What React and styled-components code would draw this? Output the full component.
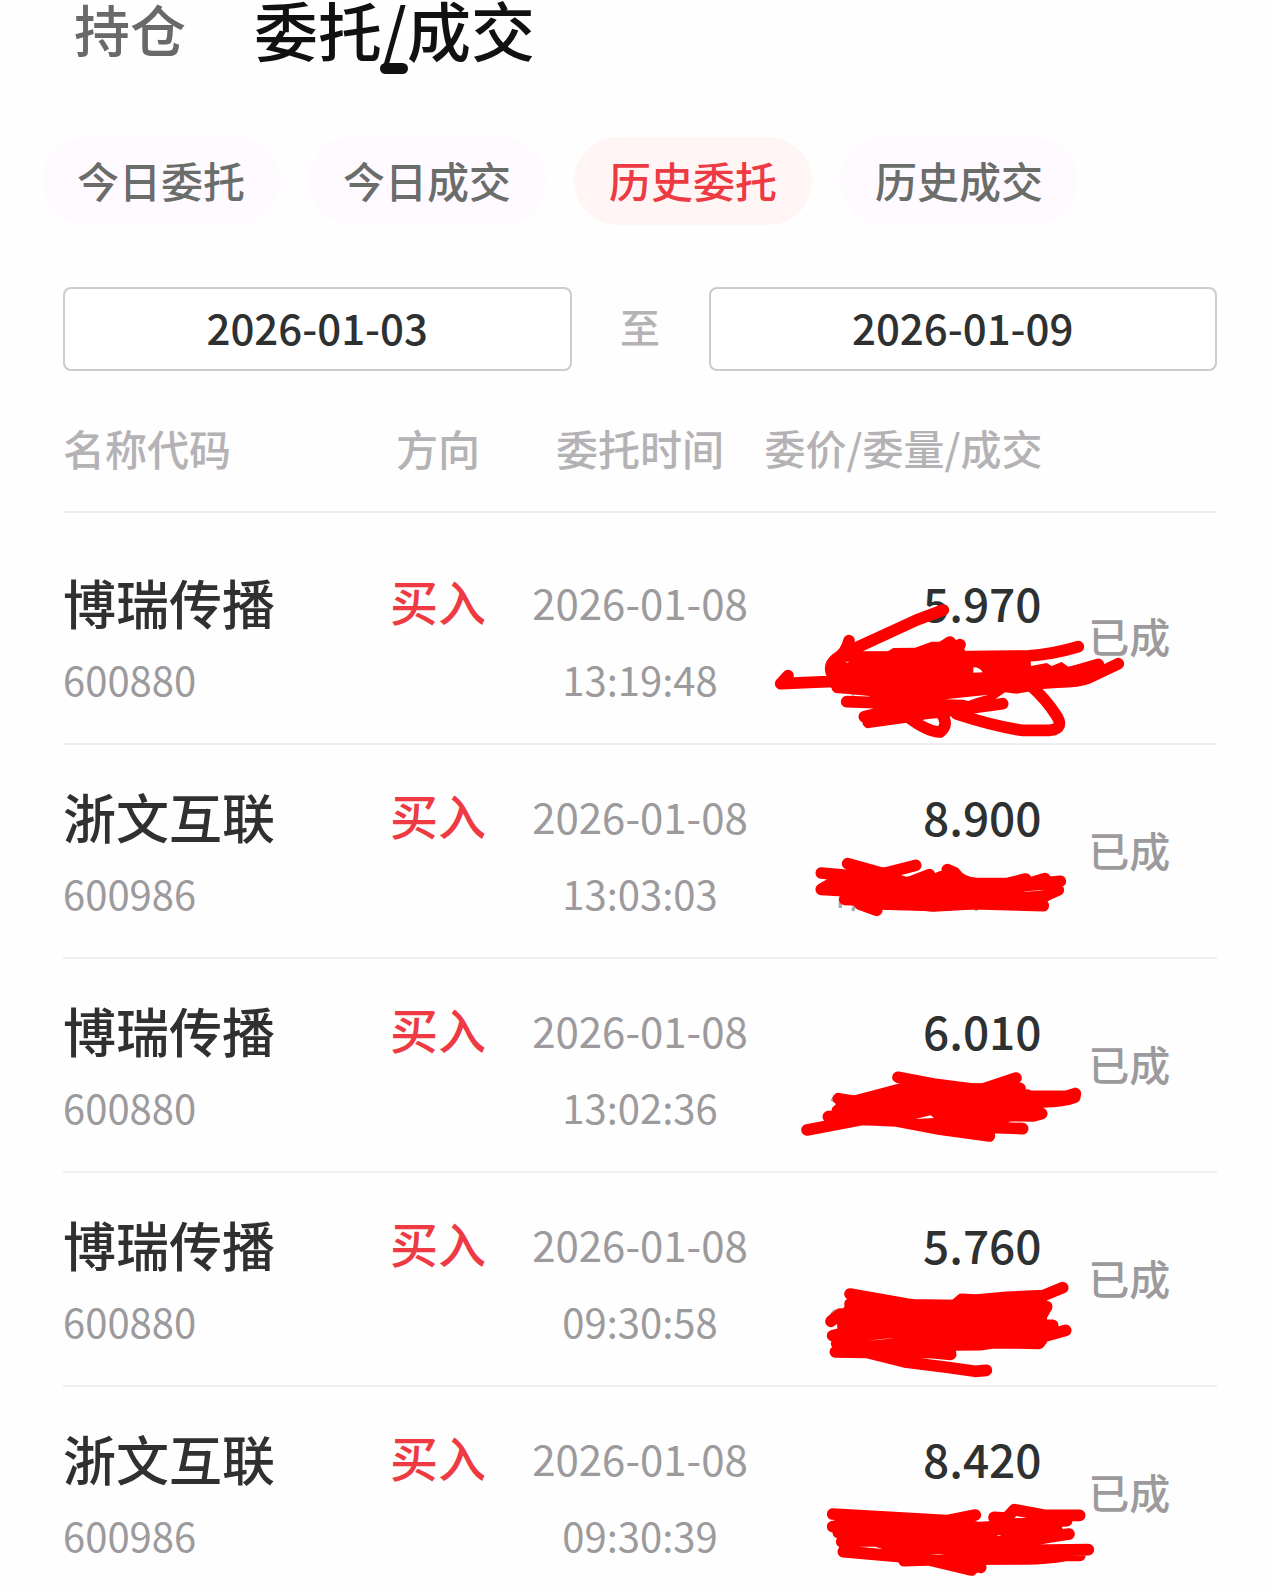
import React, { useState } from 'react';
import styled, { createGlobalStyle } from 'styled-components';

const tabs = ['持仓', '委托/成交'];
const filters = ['今日委托', '今日成交', '历史委托', '历史成交'];

// top is where the cell starts in the drawing's own units (3 per pixel)
const orders = [
	{
		name: '博瑞传播',
		code: '600880',
		date: '2026-01-08',
		time: '13:19:48',
		price: '5.970',
		ink: {
			top: -177,
			under: 'M276 316 L282 308',
			body:
				'M200 240 Q200 200 240 185 L380 186 L400 174 L465 173 L515 155 L540 155 L575 140 L610 165 L615 183 L790 182 L812 212 L813 228 L860 219 L875 228 L905 216 L925 230 L1010 212 L985 272 Q960 292 920 292 L850 297 L770 311 L735 307 L705 328 L740 328 L640 372 L480 390 L325 412 L300 380 L385 355 L330 345 L328 318 L225 308 L205 280 Z',
			strokes:
				'M550 60 L470 90 L285 175 M267 152 Q258 190 230 205 Q205 225 215 250 M84 257 L62 281 L220 274 M300 201 L640 200 L800 198 Q880 193 955 170 M1075 221 L985 264 Q950 277 900 275 L700 280 M1015 223 L930 248 L700 262 M260 335 L600 347 L650 352 L728 341 M570 156 L540 175 M600 164 L570 185 M232 292 L400 290 M313 380 L440 350 M325 397 L480 375 M440 378 Q500 425 540 426 Q568 405 545 372 M590 372 Q700 408 785 421 L870 421 Q915 415 888 375 Q860 330 810 285',
			gaps: 'M640 232 Q660 232 668 247 L640 248 Z M556 328 L685 314 L650 324 L625 333 L610 329 Z M255 215 L268 215 L262 218 Z'
		}
	},
	{
		name: '浙文互联',
		code: '600986',
		date: '2026-01-08',
		time: '13:03:03',
		price: '8.900',
		ink: {
			top: -105,
			under: 'M241 360 V384 M284 376 L278 393 M649 380 V392',
			body:
				'M200 300 L370 270 L440 290 L530 285 L600 290 L850 310 L900 335 L850 375 L520 394 L300 388 L240 350 Z',
			strokes:
				'M263 251 L370 281 L467 256 M184 279 L300 290 M184 328 L215 310 L300 325 M184 328 L300 335 M350 391 L300 373 M254 358 L400 365 M562 269 L583 278 Q605 310 650 311 L740 311 L797 297 M855 296 L800 312 M901 304 L700 322 M895 330 L838 355 L700 345 M850 377 L640 371 L520 378 L440 370 M508 284 L440 310 M545 290 L500 310',
			gaps: 'M788 334 Q830 335 854 329 Q820 332 788 334 Z'
		}
	},
	{
		name: '博瑞传播',
		code: '600880',
		date: '2026-01-08',
		time: '13:02:36',
		price: '6.010',
		ink: {
			top: -123,
			under: 'M216 304 L222 292',
			body:
				'M420 250 L780 250 L800 290 L860 300 L840 345 L750 364 L700 405 L520 375 L310 355 L220 340 L230 300 Z',
			strokes:
				'M414 232 L520 252 L660 270 L768 234 M425 272 L780 265 M235 296 L310 308 L325 296 L420 302 M232 332 L400 325 M205 350 L400 345 M141 390 L310 358 L410 363 L540 388 L688 408 M788 386 L690 382 L500 370 M845 341 L820 348 L600 345 M946 281 L944 292 Q910 305 850 306 L600 300 M800 285 L810 289 L920 289 L946 281',
			gaps: 'M466 357 L512 346 L522 354 Z'
		}
	},
	{
		name: '博瑞传播',
		code: '600880',
		date: '2026-01-08',
		time: '09:30:58',
		price: '5.760',
		ink: {
			top: -111,
			under: 'M215 316 Q218 306 228 302',
			body: 'M270 260 L560 295 L860 260 L860 400 L700 412 L590 420 L580 440 L480 446 L240 442 L230 330 Z',
			strokes:
				'M270 252 L440 282 L570 299 L605 268 L650 270 L740 262 L850 257 L908 233 M270 282 L860 290 L840 325 M213 334 L240 312 L844 322 M218 377 L240 372 L840 345 L878 346 M226 426 L320 427 L440 457 L560 472 L645 484 L679 481 M230 400 L572 433 M917 361 L850 380 L838 400 L700 398 L660 404 L590 405',
			gaps: 'M326 392 Q370 386 402 385 Q365 389 326 392 Z'
		}
	},
	{
		name: '浙文互联',
		code: '600986',
		date: '2026-01-08',
		time: '09:30:39',
		price: '8.420',
		ink: {
			top: -129,
			body:
				'M220 255 L560 270 L660 275 L740 270 L900 280 L920 320 L840 345 L850 370 L840 400 L680 404 L650 430 L510 405 L240 370 Z',
			strokes:
				'M218 252 L560 272 L646 255 M218 290 L640 290 M235 308 L600 310 M245 335 L630 335 M250 365 L420 380 L500 388 L635 420 M432 392 L640 385 M662 412 L640 400 M702 262 L740 264 L763 239 L850 255 L959 256 M920 272 L720 285 M927 312 L850 324 L680 335 M985 359 L800 361 M960 376 L920 376 Q850 388 790 387 L640 387',
			gaps: 'M296 350 L345 350 L368 357 Z M710 316 L724 316 L716 319 Z M512 374 L556 372 L535 375 Z'
		}
	}
];

const GlobalStyle = createGlobalStyle`
	* {
		box-sizing: border-box;
	}
	body {
		margin: 0;
		background: #fefefe;
		font-family: 'Noto Sans CJK SC', sans-serif;
		color: #2f3030;
	}
	button,
	input {
		font-family: inherit;
	}
`;

const Tabs = styled.nav`
	display: flex;
	gap: 68px;
	padding: 0 74px;
	height: 62px;
`;

const Tab = styled.button`
	position: relative;
	height: 56px;
	padding: 0;
	border: none;
	background: none;
	line-height: 56px;
	white-space: nowrap;
	font-size: ${({ $active }) => ($active ? '64px' : '56px')};
	font-weight: 500;
	color: ${({ $active }) => ($active ? '#111' : '#686a68')};

	&::after {
		content: '';
		display: ${({ $active }) => ($active ? 'block' : 'none')};
		position: absolute;
		top: 63px;
		left: 50%;
		width: 28px;
		height: 11px;
		margin-left: -14px;
		border-radius: 6px;
		background: #111;
	}
`;

const Filters = styled.div`
	display: flex;
	gap: 28px;
	padding: 75px 42px 62px;
`;

const Chip = styled.button`
	width: 238px;
	height: 88px;
	padding: 0 0 4px;
	border: none;
	border-radius: 44px;
	font-size: 42px;
	font-weight: 500;
	background: ${({ $active }) => ($active ? '#fff5f5' : '#fefaff')};
	color: ${({ $active }) => ($active ? '#ee3a43' : '#6b6d6b')};
`;

const Range = styled.div`
	display: flex;
	align-items: center;
	padding: 0 57px 0 63px;
`;

const DateInput = styled.input`
	flex: 1;
	min-width: 0;
	height: 84px;
	padding: 0 0 6px;
	border: 2px solid #ccc;
	border-radius: 8px;
	background: #fff;
	text-align: center;
	font-size: 42px;
	font-weight: 500;
	color: #2f3030;
	outline: none;
`;

const To = styled.span`
	width: 137px;
	padding-bottom: 6px;
	text-align: center;
	font-size: 40px;
	font-weight: 500;
	color: #b5b2b5;
`;

const Orders = styled.section`
	padding: 44px 57px 20px 63px;
`;

const Table = styled.table`
	width: 100%;
	table-layout: fixed;
	border-spacing: 0;

	tbody::before {
		content: '';
		display: block;
		height: 18px;
	}
`;

const Head = styled.th`
	width: ${({ $width }) => $width};
	height: 98px;
	padding: 0 0 32px;
	border-bottom: 2px solid #eee;
	text-align: ${({ $align }) => $align || 'left'};
	white-space: nowrap;
	font-size: ${({ $small }) => ($small ? '41px' : '42px')};
	font-weight: 500;
	color: #b5b2b5;
`;

const Row = styled.tr`
	&:not(:last-child) td {
		height: 214px;
		border-bottom: 2px solid #eee;
	}
`;

const Cell = styled.td`
	position: relative;
	padding: 42px 0 0;
	vertical-align: top;
	white-space: nowrap;
	text-align: ${({ $align }) => $align || 'left'};
`;

const StatusCell = styled(Cell)`
	padding-top: 78px;
`;

const Line = styled.div`
	height: 64px;
	line-height: 58px;
`;

const Name = styled(Line)`
	font-size: 53px;
	font-weight: 500;
`;

const Direction = styled(Line)`
	line-height: 54px;
	font-size: 48px;
	font-weight: 500;
	color: #ee3a43;
`;

const Price = styled(Line)`
	font-size: 46px;
	font-weight: 500;
`;

const DateText = styled(Line)`
	font-size: 42px;
	color: #9c9a9c;
`;

const Sub = styled.div`
	margin-top: 16px;
	height: 56px;
	line-height: 52px;
	font-size: 40px;
	color: #9c9a9c;
`;

const Status = styled.div`
	height: 56px;
	line-height: 52px;
	font-size: 41px;
	font-weight: 500;
	color: #9c9a9c;
`;

const InkSvg = styled.svg`
	position: absolute;
	top: 0;
	right: -100px;
	z-index: 1;
	width: 380px;
	height: 190px;
	overflow: visible;
	pointer-events: none;
`;

const Ink = ({ top, under, body, strokes, gaps }) => (
	<InkSvg viewBox={`6 ${top} 1140 570`} aria-hidden="true">
		{under && <path d={under} fill="none" stroke="#aaa" strokeWidth="10" />}
		<path d={body} fill="#f00" />
		<path
			d={strokes}
			fill="none"
			stroke="#f00"
			strokeWidth="35"
			strokeLinecap="round"
			strokeLinejoin="round"
		/>
		<path d={gaps} fill="#fefefe" />
	</InkSvg>
);

export default function App() {
	const [tab, setTab] = useState(1);
	const [filter, setFilter] = useState(2);
	const [from, setFrom] = useState('2026-01-03');
	const [to, setTo] = useState('2026-01-09');

	return (
		<main>
			<GlobalStyle />
			<Tabs>
				{tabs.map((label, i) => (
					<Tab key={label} $active={i === tab} onClick={() => setTab(i)}>
						{label}
					</Tab>
				))}
			</Tabs>
			<Filters>
				{filters.map((label, i) => (
					<Chip key={label} $active={i === filter} onClick={() => setFilter(i)}>
						{label}
					</Chip>
				))}
			</Filters>
			<Range>
				<DateInput aria-label="开始日期" value={from} onChange={e => setFrom(e.target.value)} />
				<To>至</To>
				<DateInput aria-label="结束日期" value={to} onChange={e => setTo(e.target.value)} />
			</Range>
			<Orders>
				<Table>
					<thead>
						<tr>
							<Head $width="25.8%">名称代码</Head>
							<Head $width="13.4%" $align="center">
								方向
							</Head>
							<Head $width="21.6%" $align="center">
								委托时间
							</Head>
							<Head $width="24%" $align="right" $small>
								委价/委量/成交
							</Head>
							<Head $width="15.2%" />
						</tr>
					</thead>
					<tbody>
						{orders.map(order => (
							<Row key={order.date + order.time}>
								<Cell>
									<Name>{order.name}</Name>
									<Sub>{order.code}</Sub>
								</Cell>
								<Cell $align="center">
									<Direction>买入</Direction>
								</Cell>
								<Cell $align="center">
									<DateText>{order.date}</DateText>
									<Sub>{order.time}</Sub>
								</Cell>
								<Cell $align="right">
									<Price>{order.price}</Price>
									<Ink {...order.ink} />
								</Cell>
								<StatusCell $align="center">
									<Status>已成</Status>
								</StatusCell>
							</Row>
						))}
					</tbody>
				</Table>
			</Orders>
		</main>
	);
}
